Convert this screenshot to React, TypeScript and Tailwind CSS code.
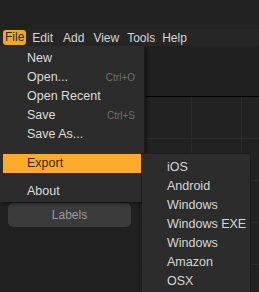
import React from "react";

const font = { fontFamily: '"Liberation Sans", Arial, sans-serif' };

function MenuItem({ label, shortcut, active }: { label: string; shortcut?: string; active?: boolean }) {
  return (
    <div
      className={
        "flex h-[19px] items-center justify-between pr-[9px] " +
        (active ? "mx-[3px] h-[18px] bg-[#fbab2b] pl-[24px] text-[#3a2a10]" : "pl-[27px] text-[#dcdcdc]")
      }
    >
      <span>{label}</span>
      {shortcut && <span className="text-[10px] text-[#6f6f6f]">{shortcut}</span>}
    </div>
  );
}

export default function App() {
  const sub = ["iOS", "Android", "Windows", "Windows EXE", "Windows", "Amazon", "OSX"];
  return (
    <div className="relative h-[292px] w-[259px] overflow-hidden bg-[#222222] text-[12.5px]" style={font}>
      <div className="h-[29px] bg-[#222222]" />
      <div className="flex h-[17px] items-center bg-[#262626] text-[12px] text-[#d6d6d6]">
        <span className="ml-[3px] rounded-[3px] bg-[#f5a623] px-[2px] leading-[15px] text-[#2b2b2b]">File</span>
        <span className="ml-[6px]">Edit</span>
        <span className="ml-[10px]">Add</span>
        <span className="ml-[9px]">View</span>
        <span className="ml-[8px]">Tools</span>
        <span className="ml-[7px]">Help</span>
      </div>
      <div className="flex h-[246px]">
        <div className="flex w-[140px] flex-col border-r border-[#181818] bg-[#212121]">
          <div className="h-[157px]" />
          <div className="mx-[8px] flex h-[24px] items-center justify-center rounded-[5px] bg-[#3b3b3b] text-[12px] text-[#9a9a9a]">
            Labels
          </div>
        </div>
        <div className="flex flex-1 flex-col">
          <div className="h-[51px] border-b border-black bg-[#202020]" />
          <div
            className="flex-1 bg-[#222222]"
            style={{
              backgroundImage:
                "linear-gradient(#2c2c2c 1px, transparent 1px), linear-gradient(90deg, #2c2c2c 1px, transparent 1px)",
              backgroundSize: "50px 42px",
              backgroundPosition: "1px 41px",
            }}
          />
        </div>
      </div>

      <div className="absolute left-0 top-[46px] flex h-[156px] w-[145px] flex-col border-r border-[#1c1c1c] bg-[#2c2c2c] pt-[3px] text-[#dcdcdc] shadow-[2px_2px_3px_rgba(0,0,0,0.4)]">
        <MenuItem label="New" />
        <MenuItem label="Open..." shortcut="Ctrl+O" />
        <MenuItem label="Open Recent" />
        <MenuItem label="Save" shortcut="Ctrl+S" />
        <MenuItem label="Save As..." />
        <div className="h-[10px]" />
        <MenuItem label="Export" active />
        <div className="h-[9px]" />
        <MenuItem label="About" />
      </div>

      <div className="absolute left-[141px] top-[153px] h-[150px] w-[110px] border border-[#1c1c1c] bg-[#2c2c2c] pt-[4px] text-[#d6d6d6]">
        {sub.map((s, i) => (
          <div key={i} className="flex h-[19px] items-center pl-[25px]">
            {s}
          </div>
        ))}
      </div>
    </div>
  );
}
